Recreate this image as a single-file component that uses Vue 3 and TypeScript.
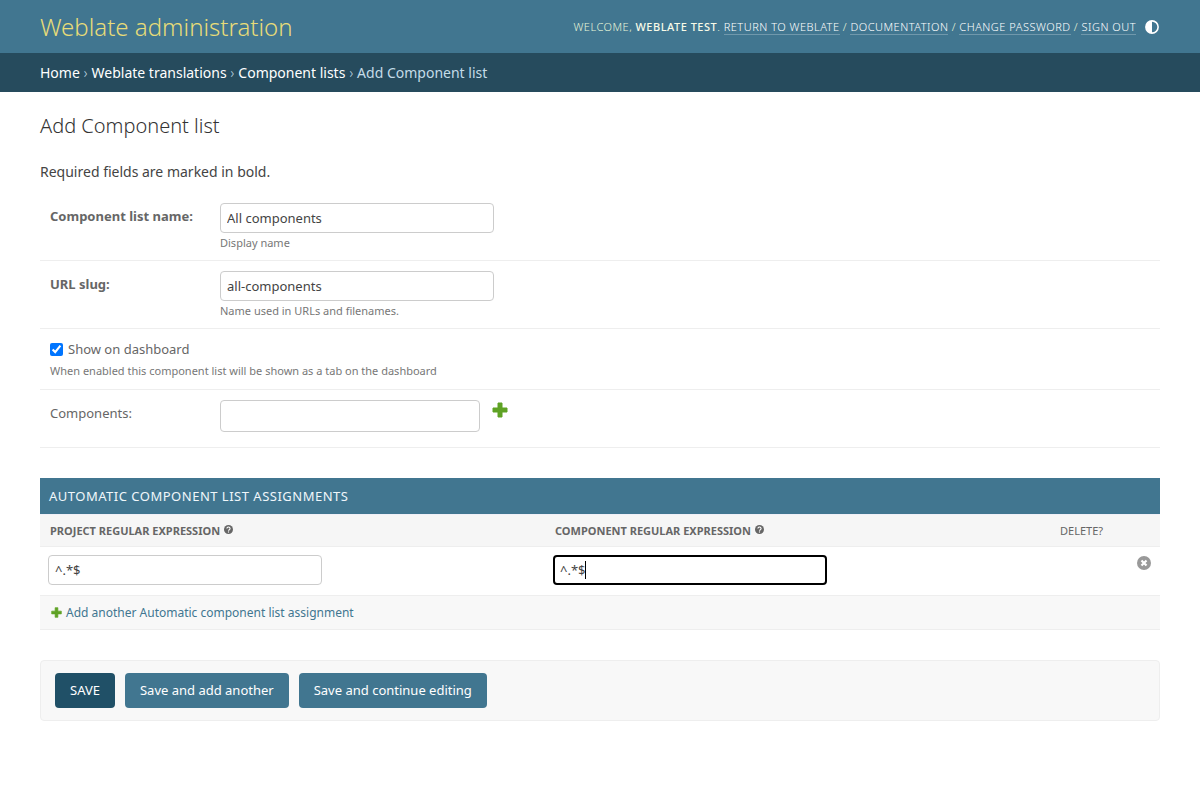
<script setup lang="ts">
import { ref } from "vue";

const links = ["Return to Weblate", "Documentation", "Change password", "Sign out"];
const crumbs = ["Home", "Weblate translations", "Component lists"];

const listName = ref("All components");
const slug = ref("all-components");
const dashboard = ref(true);
const projectRe = ref("^.*$");
const componentRe = ref("^.*$");
</script>

<template>
    <div class="page">
        <header class="header">
            <div class="brand">Weblate administration</div>
            <div class="tools">
                <span>Welcome, <strong>Weblate Test</strong>.</span>
                <template v-for="(link, i) in links" :key="link">
                    <span v-if="i > 0" class="sep">/</span>
                    <a href="#">{{ link }}</a>
                </template>
                <svg class="theme" viewBox="0 0 16 16" width="14" height="14">
                    <circle cx="8" cy="8" r="7" fill="#417690" stroke="#fff" stroke-width="1.8" />
                    <path d="M8 1a7 7 0 0 0 0 14z" fill="#fff" />
                </svg>
            </div>
        </header>

        <nav class="crumbs">
            <template v-for="crumb in crumbs" :key="crumb">
                <a href="#">{{ crumb }}</a>
                <span class="arrow">›</span>
            </template>
            <span>Add Component list</span>
        </nav>

        <main class="content">
            <h1>Add Component list</h1>
            <p class="note">Required fields are marked in bold.</p>

            <div class="row row-name">
                <div class="field">
                    <label class="required">Component list name:</label>
                    <div>
                        <input v-model="listName" class="text" type="text" />
                        <div class="help help-field">Display name</div>
                    </div>
                </div>
            </div>
            <div class="row row-name">
                <div class="field">
                    <label class="required">URL slug:</label>
                    <div>
                        <input v-model="slug" class="text" type="text" />
                        <div class="help help-field">Name used in URLs and filenames.</div>
                    </div>
                </div>
            </div>
            <div class="row row-check">
                <label class="check">
                    <input v-model="dashboard" type="checkbox" />
                    <span>Show on dashboard</span>
                </label>
                <div class="help">When enabled this component list will be shown as a tab on the dashboard</div>
            </div>
            <div class="row row-components">
                <div class="field">
                    <label>Components:</label>
                    <div class="select-line">
                        <div class="select"></div>
                        <svg class="add-big" viewBox="0 0 16 16" width="16" height="16">
                            <path d="M6 1h4v5h5v4h-5v5H6v-5H1V6h5z" fill="#5fa225" stroke="#5fa225" stroke-linejoin="round" />
                        </svg>
                    </div>
                </div>
            </div>

            <section class="group">
                <h2>Automatic component list assignments</h2>
                <div class="thead cols">
                    <div class="strong">Project regular expression
                        <svg class="q" viewBox="0 0 16 16" width="9" height="9">
                            <circle cx="8" cy="8" r="8" fill="#666" />
                            <path d="M5.2 6.2a2.8 2.6 0 1 1 4.4 2.1c-.9.6-1.6 1-1.6 2" fill="none" stroke="#fff" stroke-width="2" />
                            <rect x="7" y="11.4" width="2" height="2" fill="#fff" />
                        </svg>
                    </div>
                    <div class="strong">Component regular expression
                        <svg class="q" viewBox="0 0 16 16" width="9" height="9">
                            <circle cx="8" cy="8" r="8" fill="#666" />
                            <path d="M5.2 6.2a2.8 2.6 0 1 1 4.4 2.1c-.9.6-1.6 1-1.6 2" fill="none" stroke="#fff" stroke-width="2" />
                            <rect x="7" y="11.4" width="2" height="2" fill="#fff" />
                        </svg>
                    </div>
                    <div>Delete?</div>
                </div>
                <div class="tbody cols">
                    <div><input v-model="projectRe" class="text" type="text" /></div>
                    <div class="focus-wrap">
                        <input v-model="componentRe" class="text focused" type="text" />
                        <span class="caret"></span>
                    </div>
                    <div class="del-cell">
                        <svg viewBox="0 0 14 14" width="14" height="14">
                            <circle cx="7" cy="7" r="7" fill="#999" />
                            <path d="M4.5 4.5l5 5m0-5l-5 5" stroke="#fff" stroke-width="2.2" />
                        </svg>
                    </div>
                </div>
                <div class="add-row">
                    <svg viewBox="0 0 16 16" width="11" height="11">
                        <path d="M6 1h4v5h5v4h-5v5H6v-5H1V6h5z" fill="#5fa225" stroke="#5fa225" stroke-linejoin="round" />
                    </svg>
                    <a href="#">Add another Automatic component list assignment</a>
                </div>
            </section>

            <div class="submit">
                <button class="btn default">Save</button>
                <button class="btn">Save and add another</button>
                <button class="btn">Save and continue editing</button>
            </div>
        </main>
    </div>
</template>

<style>
html, body {
    margin: 0;
    background: #fff;
}
</style>

<style scoped>
.page {
    font-family: "Noto Sans", "Open Sans", sans-serif;
    font-size: 14px;
    color: #444;
}
a {
    text-decoration: none;
}

.header {
    height: 53px;
    box-sizing: border-box;
    background: #417690;
    padding: 0 40px;
    display: flex;
    justify-content: space-between;
    align-items: center;
}
.brand {
    font-size: 24px;
    font-weight: 300;
    color: #e8dc78;
}
.tools {
    display: flex;
    align-items: center;
    font-size: 11px;
    letter-spacing: 0.5px;
    text-transform: uppercase;
    font-weight: 300;
    color: #e6f5d8;
    white-space: pre;
}
.tools strong {
    font-weight: 500;
    color: #f8fbe8;
}
.tools a {
    color: #fff;
    border-bottom: 1px solid rgba(255, 255, 255, 0.25);
    margin-left: 3.3px;
}
.sep {
    margin-left: 3.3px;
}
.theme {
    margin-left: 9px;
    margin-right: 1px;
}

.crumbs {
    height: 39px;
    box-sizing: border-box;
    background: #264b5d;
    padding: 0 40px;
    display: flex;
    align-items: center;
    font-size: 14px;
    color: #c4dce8;
}
.crumbs a {
    color: #fff;
}
.arrow {
    margin: 0 4px;
    font-weight: 300;
}

.content {
    padding: 20px 40px 0;
}
h1 {
    font-size: 20px;
    font-weight: 300;
    line-height: 28px;
    margin: 0 0 20px;
    color: #333;
}
.note {
    margin: 0 0 9px;
    line-height: 24px;
}

.row {
    box-sizing: border-box;
    border-bottom: 1px solid #eee;
    padding: 10px;
}
.row-name {
    height: 68px;
}
.row-check {
    height: 61px;
}
.row-components {
    height: 58px;
}
.field {
    display: flex;
}
.field label {
    width: 170px;
    flex: none;
    padding-top: 3px;
    font-size: 13px;
    line-height: 20px;
    color: #666;
}
.field label.required {
    font-weight: 700;
}
.text {
    display: block;
    box-sizing: border-box;
    width: 274px;
    height: 30px;
    padding: 0 6px;
    border: 1px solid #ccc;
    border-radius: 4px;
    font: 13px "Noto Sans", sans-serif;
    color: #444;
    background: #fff;
    outline: none;
}
.help {
    font-size: 11px;
    line-height: 16px;
    color: #777;
}
.help-field {
    margin-top: 2px;
}
.check {
    display: flex;
    align-items: center;
    height: 20px;
    color: #666;
    font-size: 13px;
}
.check input {
    width: 13px;
    height: 13px;
    margin: 0 5px 0 0;
}
.row-check .help {
    margin-top: 4px;
}
.select-line {
    display: flex;
    align-items: flex-start;
}
.select {
    box-sizing: border-box;
    width: 260px;
    height: 32px;
    border: 1px solid #ccc;
    border-radius: 4px;
}
.add-big {
    margin: 2px 0 0 12px;
}

.group {
    margin-top: 30px;
}
h2 {
    margin: 0;
    height: 36px;
    box-sizing: border-box;
    background: #417690;
    padding: 0 9px;
    display: flex;
    align-items: center;
    font-size: 13px;
    font-weight: 400;
    letter-spacing: 0.5px;
    text-transform: uppercase;
    color: #f0f7fb;
}
.cols {
    display: grid;
    grid-template-columns: 505px 505px 1fr;
}
.thead {
    height: 33px;
    box-sizing: border-box;
    background: #f6f6f6;
    border-top: 1px solid #f0f0f8;
    border-bottom: 1px solid #eee;
    padding: 0 0 0 10px;
    align-items: center;
    font-size: 11px;
    text-transform: uppercase;
    color: #666;
}
.strong {
    font-weight: 700;
}
.q {
    margin-left: 1px;
    position: relative;
    top: -1px;
}
.tbody {
    height: 49px;
    box-sizing: border-box;
    border-bottom: 1px solid #eee;
    padding: 8px 0 0 8px;
}
.focus-wrap {
    position: relative;
}
.text.focused {
    border: 2px solid #000;
    padding: 0 5px;
}
.caret {
    position: absolute;
    left: 32px;
    top: 6px;
    width: 1px;
    height: 18px;
    background: #000;
}
.del-cell {
    display: flex;
    justify-content: flex-end;
    padding-right: 9px;
    padding-top: 1px;
}
.add-row {
    height: 34px;
    box-sizing: border-box;
    background: #f8f8f8;
    border-bottom: 1px solid #eee;
    padding: 0 0 0 11px;
    display: flex;
    align-items: center;
    gap: 4px;
    font-size: 12px;
}
.add-row a {
    color: #417690;
}

.submit {
    margin-top: 30px;
    height: 61px;
    box-sizing: border-box;
    background: #f8f8f8;
    border: 1px solid #eee;
    border-radius: 4px;
    padding: 12px 14px;
    display: flex;
    gap: 10px;
}
.btn {
    height: 35px;
    padding: 0 15px 1px;
    border: none;
    border-radius: 4px;
    background: #417690;
    color: #fff;
    font: 13px "Noto Sans", sans-serif;
}
.btn.default {
    background: #205067;
    text-transform: uppercase;
}
</style>
